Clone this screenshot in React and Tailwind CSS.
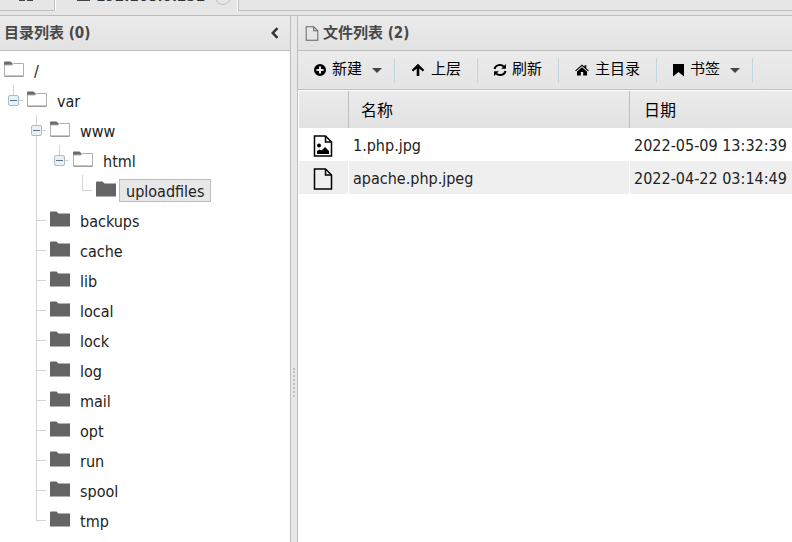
import React from "react";

const LEAVES = ["backups", "cache", "lib", "local", "lock", "log", "mail", "opt", "run", "spool", "tmp"];

function Folder({ open }) {
  return (
    <svg viewBox="0 0 20 16" className="h-4 w-5 shrink-0" aria-hidden="true">
      {open ? (
        <>
          <path d="M0 4V1.500Q0 .5 1 .5H6.500L8.500 2.500V4Z" fill="#6b6b6b" />
          <path d="M.5 4H8L9.500 2.500H19.500V15H.5Z" fill="#fff" stroke="#b0b0b0" />
          <path d="M.5 15.300H19.500" stroke="#8c8c8c" />
        </>
      ) : (
        <path d="M0 1.500Q0 .5 1 .5H6.500L8.500 2.500H20V15.500H0Z" fill="#646464" />
      )}
    </svg>
  );
}

function Toggle() {
  return (
    <button type="button" aria-label="collapse" className="flex size-[11px] items-center justify-center rounded-xs border border-[#a9bccb] bg-[#e9f1f6]">
      <span className="h-px w-[7px] bg-[#52768f]" />
    </button>
  );
}

/* One 23px wide column of connector lines in front of a folder. */
function Elbow({ toggle, last, line = true }) {
  return (
    <span className="grid h-[30px] w-[23px] shrink-0 grid-cols-[14px_9px] grid-rows-[16px_14px]">
      {toggle ? (
        <>
          <span className="col-start-1 row-start-1 border-r border-[#d4d4d4]" />
          <span className={`col-start-1 row-start-2 ${line ? "border-r border-[#d4d4d4]" : ""}`} />
          <span className="col-span-2 col-start-1 row-span-2 row-start-1 flex items-center pl-2">
            <Toggle />
            <span className="h-px w-1 bg-[#d4d4d4]" />
          </span>
        </>
      ) : (
        <>
          <span className="border-r border-[#d4d4d4]" />
          <span className="border-b border-[#d4d4d4]" />
          <span className={last ? "" : "border-r border-[#d4d4d4]"} />
          <span />
        </>
      )}
    </span>
  );
}

function Rail() {
  return <span className="mr-[9px] h-[30px] w-[14px] shrink-0 border-r border-[#d4d4d4]" />;
}

function Gap() {
  return <span className="w-[23px] shrink-0" />;
}

function Node({ children, selected, open }) {
  return (
    <>
      <span className="flex h-full items-center pb-[2px] pl-1"><Folder open={open} /></span>
      <span className={`ml-[3px] border px-[6px] pt-[2px] leading-[19px] ${selected ? "border-[#bcbcbc] bg-[#e7e7e7]" : "border-transparent"}`}>
        {children}
      </span>
    </>
  );
}

function Row({ children }) {
  return <li className="flex h-[30px] items-center">{children}</li>;
}

function Tree() {
  return (
    <ul className="pt-1 text-base text-[#222]">
      <Row><Node open>/</Node></Row>
      <Row><Elbow toggle line={false} /><Node open>var</Node></Row>
      <Row><Gap /><Elbow toggle /><Node open>www</Node></Row>
      <Row><Gap /><Rail /><Elbow toggle line={false} /><Node open>html</Node></Row>
      <Row><Gap /><Rail /><Gap /><Elbow last /><Node selected>uploadfiles</Node></Row>
      {LEAVES.map((name) => (
        <Row key={name}>
          <Gap />
          <Elbow last={name === "tmp"} />
          <Node>{name}</Node>
        </Row>
      ))}
    </ul>
  );
}

function FileIcon({ image, className }) {
  return (
    <svg viewBox="0 0 20 22" className={className} fill="none" stroke="currentColor" strokeWidth="1.500" aria-hidden="true">
      <path d="M1.500 1H12.500L18.500 7V21H1.500Z" />
      <path d="M12.500 1V7H18.500" />
      {image && (
        <>
          <circle cx="6" cy="10.500" r="2" fill="currentColor" stroke="none" />
          <path d="M4 19V16L6.500 14.500L8.500 15.500L12 12L16 16V19Z" fill="currentColor" stroke="none" />
        </>
      )}
    </svg>
  );
}

function ToolIcon({ name }) {
  if (name === "plus") {
    return (
      <svg viewBox="0 0 12 12" className="size-3 shrink-0" fill="currentColor" aria-hidden="true">
        <path fillRule="evenodd" d="M6 0a6 6 0 1 0 0 12A6 6 0 0 0 6 0ZM5 2.500h2V5h2.500v2H7v2.500H5V7H2.500V5H5Z" />
      </svg>
    );
  }
  if (name === "bookmark") {
    return (
      <svg viewBox="0 0 11 14" className="h-[14px] w-[11px] shrink-0" fill="currentColor" aria-hidden="true">
        <path d="M0 1H11V13.500L5.500 9 0 13.500Z" />
      </svg>
    );
  }
  if (name === "refresh") {
    return (
      <svg viewBox="1 0 12 14" className="h-[14px] w-3 shrink-0 overflow-visible" fill="none" stroke="currentColor" strokeWidth="2" aria-hidden="true">
        <path d="M1.500 6A5.500 5 0 0 1 11 3.600M12.500 8A5.500 5 0 0 1 3 10.400" />
        <path d="M13 1V5.800H8.200ZM1 13V8.200H5.800Z" fill="currentColor" stroke="none" />
      </svg>
    );
  }
  return (
    <svg viewBox="0 0 14 14" className="size-[14px] shrink-0" fill="currentColor" aria-hidden="true">
      {name === "up" && <path d="M7 .8 13.300 7.100 11.800 8.600 8.300 5.400V13H5.700V5.400L2.200 8.600.7 7.100Z" />}
      {name === "home" && <path d="M7 1.500 9.500 3.700V2.200h1.800v3L13.800 7.500l-.7.800L7 3.100.9 8.300.2 7.500ZM7 4.200 12 8.400V12.500H8.200V9H5.800v3.500H2V8.400Z" />}
    </svg>
  );
}

function Tool({ icon, label, menu }) {
  return (
    <li className="flex h-[25px] items-center border-r border-[#c3d6da]">
      <button type="button" className={`flex h-full items-center gap-[6px] pl-4 text-[15px] text-black ${menu ? "pr-3" : "pr-4"}`}>
        <ToolIcon name={icon} />
        <span className="pb-[2px]">{label}</span>
        {menu && <span className="ml-1 border-x-[5px] border-t-[5px] border-x-transparent border-t-[#444]" />}
      </button>
    </li>
  );
}

const FILES = [
  { name: "1.php.jpg", date: "2022-05-09 13:32:39", image: true },
  { name: "apache.php.jpeg", date: "2022-04-22 03:14:49" },
];

/* The strip shows only the lower edge of its tabs. */
function Tabs() {
  return (
    <nav className="flex h-[11px] items-end">
      <button type="button" aria-label="home" className="flex h-[11px] w-[55px] shrink-0 items-start gap-[2px] border-b border-r border-[#bfbfbf] pl-[19px]">
        <span className="h-px w-[6px] bg-[#444]" />
        <span className="h-px w-[6px] bg-[#444]" />
      </button>
      <div className="flex h-[11px] w-[183px] shrink-0 items-end justify-between overflow-hidden border-x border-x-white pl-[21px] pr-[6px] text-[15px] font-bold leading-[18px] text-[#333]">
        <button type="button" className="flex h-[11px] items-end gap-[6px]">
          <span className="mb-[10px] h-px w-[13px] bg-[#444]" />
          <span className="mb-[6px]">192.168.0.232</span>
        </button>
        <button type="button" aria-label="close" className="mb-[6px] size-4 rounded-full border border-[#bdbdbd]" />
      </div>
      <div className="h-[11px] flex-1 border-b border-l border-[#bfbfbf]" />
    </nav>
  );
}

export default function App() {
  return (
    <div className="flex min-h-screen flex-col overflow-hidden bg-[#e6e6e6] font-['DejaVu_Sans_Condensed','Noto_Sans_CJK_SC',sans-serif] text-[#222]">
      <Tabs />
      <main className="mt-1 flex flex-1 border-t border-[#bdbdbd]">
        <section className="flex w-[291px] shrink-0 flex-col border-r border-[#bdbdbd] bg-white">
          <header className="flex h-[35px] items-center justify-between border-b border-[#bdbdbd] bg-linear-to-b from-[#ebebeb] to-[#e2e2e2] pl-1 pr-[10px]">
            <h2 className="text-[15px] font-bold text-[#484848]">目录列表 (0)</h2>
            <button type="button" aria-label="collapse panel">
              <svg viewBox="0 0 10 12" className="h-3 w-[10px]" fill="none" stroke="#333" strokeWidth="2.500"><path d="M7.500 1.200 2.800 6l4.700 4.800" /></svg>
            </button>
          </header>
          <Tree />
        </section>
        <div className="flex w-[6px] shrink-0 items-start justify-center bg-[#e8e8e8] pt-[352px]">
          <div className="h-[29px] border-l-2 border-dotted border-[#c0c0c0]" />
        </div>
        <section className="min-w-0 flex-1 border-l border-[#bdbdbd] bg-white">
          <header className="flex h-[35px] items-center gap-1 border-b border-[#bdbdbd] bg-linear-to-b from-[#ebebeb] to-[#e2e2e2] pl-[7px]">
            <FileIcon className="h-[15px] w-[14px] text-[#666]" />
            <h2 className="text-[15px] font-bold text-[#484848]">文件列表 (2)</h2>
          </header>
          <ul className="flex h-[39px] items-center border-b border-[#bdbdbd] bg-linear-to-b from-[#ebebeb] to-[#e4e4e4]">
            <Tool icon="plus" label="新建" menu />
            <Tool icon="up" label="上层" />
            <Tool icon="refresh" label="刷新" />
            <Tool icon="home" label="主目录" />
            <Tool icon="bookmark" label="书签" menu />
          </ul>
          <div className="pl-px pt-px">
            <table className="w-full table-fixed border-separate border-spacing-0 text-left text-base">
              <colgroup><col className="w-[50px]" /><col /><col className="w-[162px]" /></colgroup>
              <thead>
                <tr className="h-[37px] text-black *:bg-linear-to-b *:from-[#ebebeb] *:to-[#e2e2e2] *:pt-[2px] *:font-normal">
                  <th className="border-r border-[#bdbdbd]" />
                  <th className="border-r border-[#bdbdbd] pl-3">名称</th>
                  <th className="pl-[14px]">日期</th>
                </tr>
              </thead>
              <tbody>
                {FILES.map((f) => (
                  <tr key={f.name} className="h-[33px] even:bg-[#efefef] *:pt-[2px]">
                    <td className="border-r border-white pl-[14px]"><FileIcon image={f.image} className="h-[22px] w-5 text-black" /></td>
                    <td className="border-r border-white pl-1">{f.name}</td>
                    <td className="whitespace-nowrap pl-1">{f.date}</td>
                  </tr>
                ))}
              </tbody>
            </table>
          </div>
        </section>
      </main>
    </div>
  );
}
